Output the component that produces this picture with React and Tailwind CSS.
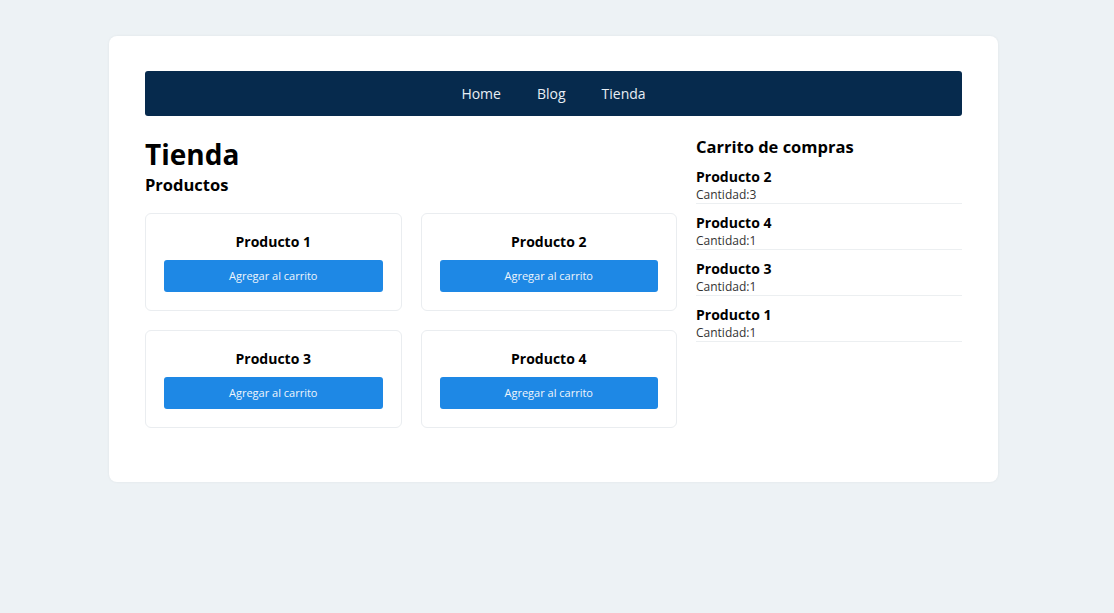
const productos = ["Producto 1", "Producto 2", "Producto 3", "Producto 4"];

const carrito = [
  { nombre: "Producto 2", cantidad: 3 },
  { nombre: "Producto 4", cantidad: 1 },
  { nombre: "Producto 3", cantidad: 1 },
  { nombre: "Producto 1", cantidad: 1 },
];

function ProductCard({ nombre }) {
  return (
    <div className="rounded-md border border-[#eaedf0] bg-white p-[18px] text-center">
      <h3 className="text-[14px] font-bold leading-5 text-black">{nombre}</h3>
      <button className="mt-2 h-8 w-full rounded-[3px] bg-[#1e88e5] text-[11px] text-[#eef5fc]">
        Agregar al carrito
      </button>
    </div>
  );
}

export default function App() {
  return (
    <div
      className="min-h-screen bg-[#edf2f5] pt-9"
      style={{ fontFamily: '"Open Sans", "Liberation Sans", sans-serif' }}
    >
      <div className="ml-[109px] w-[889px] rounded-lg bg-white px-9 pt-[35px] pb-[54px] shadow-[0_0_3px_rgba(0,0,0,0.06)]">
        <nav className="flex h-[45px] items-center justify-center gap-[36px] rounded-[3px] bg-[#062a4d] text-[14px] text-[#e8eef4]">
          <a href="#">Home</a>
          <a href="#">Blog</a>
          <a href="#">Tienda</a>
        </nav>

        <div className="mt-5 grid grid-cols-[532px_266px] gap-[19px]">
          <section>
            <h1 className="text-[28px] font-bold leading-9 text-black">Tienda</h1>
            <h2 className="mt-px text-[16.5px] font-bold leading-6 text-black">Productos</h2>
            <div className="mt-4 grid grid-cols-2 gap-[19px]">
              {productos.map((p) => (
                <ProductCard key={p} nombre={p} />
              ))}
            </div>
          </section>

          <aside>
            <h2 className="text-[16.5px] font-bold leading-[22px] text-black">Carrito de compras</h2>
            <ul className="mt-[9px]">
              {carrito.map((item) => (
                <li key={item.nombre} className="mb-[9px] border-b border-[#eceff1]">
                  <p className="text-[14px] font-bold leading-5 text-black">{item.nombre}</p>
                  <p className="text-[12px] leading-4 text-[#333]">Cantidad:{item.cantidad}</p>
                </li>
              ))}
            </ul>
          </aside>
        </div>
      </div>
    </div>
  );
}
